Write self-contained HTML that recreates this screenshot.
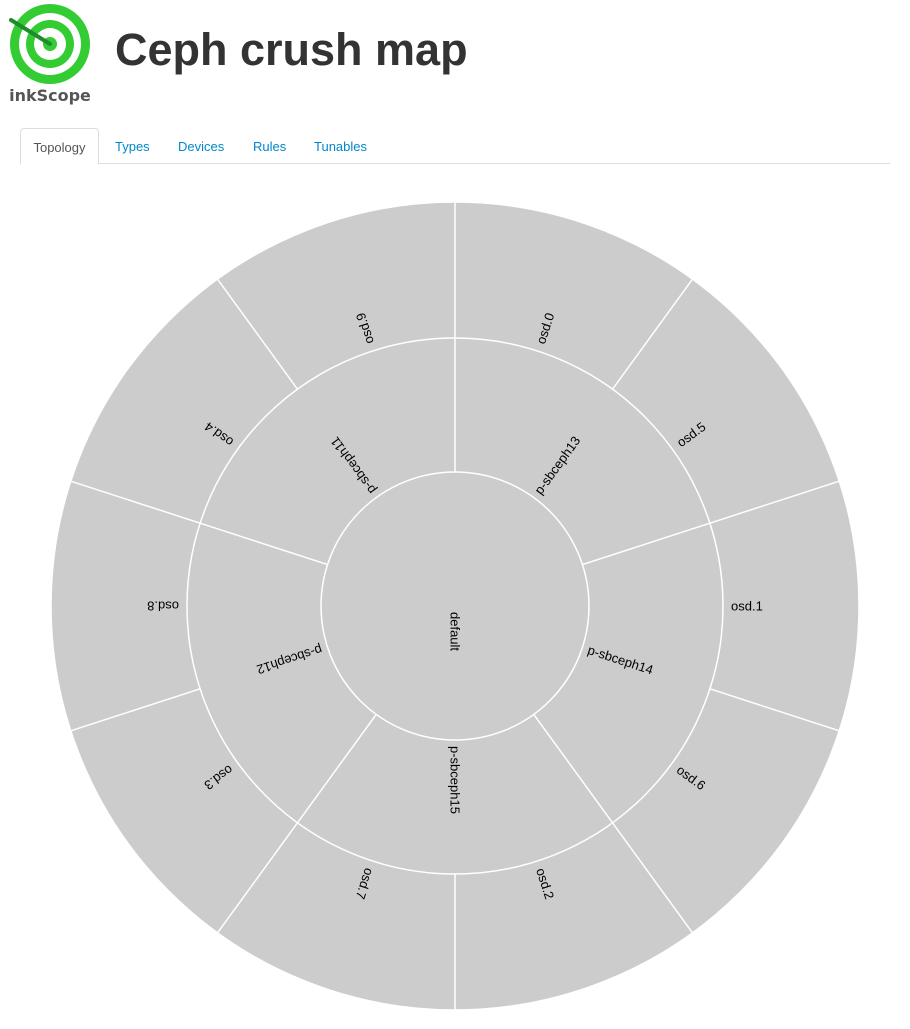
<!DOCTYPE html>
<html><head><meta charset="utf-8"><style>
body{margin:0;background:#fff;width:910px;height:1029px;overflow:hidden;font-family:"Liberation Sans",Arial,sans-serif;}
h1{position:absolute;left:115px;top:22px;margin:0;font-size:45px;font-weight:bold;color:#333;line-height:56px;}
.logo{position:absolute;left:0;top:0;}
.tabs{position:absolute;left:20px;top:128px;width:870px;height:35px;border-bottom:1px solid #ddd;}
.tab{position:absolute;top:0;height:35px;line-height:37px;font-size:13px;color:#0088cc;}
.tab.active{left:0;width:77px;border:1px solid #ddd;border-bottom:1px solid #fff;border-radius:4px 4px 0 0;color:#555;text-align:center;background:#fff;height:35px;}
svg.sb text{font-family:"Liberation Sans",Arial,sans-serif;font-size:13px;fill:#000;}
</style></head><body>
<svg class="logo" width="100" height="110" viewBox="0 0 100 110">
<circle cx="50" cy="44" r="40" fill="#33cc33"/>
<circle cx="50" cy="44" r="31" fill="#fff"/>
<circle cx="50" cy="44" r="24" fill="#33cc33"/>
<circle cx="50" cy="44" r="16" fill="#fff"/>
<circle cx="50" cy="44" r="7" fill="#33cc33"/>
<line x1="11" y1="20" x2="50" y2="44" stroke="#1e8c2a" stroke-width="4" stroke-linecap="round"/>
<text x="50" y="101" text-anchor="middle" font-family="DejaVu Sans, sans-serif" font-weight="bold" font-size="16" fill="#555">inkScope</text>
</svg>
<h1>Ceph crush map</h1>
<div class="tabs">
<div class="tab active">Topology</div>
<div class="tab" style="left:95px">Types</div>
<div class="tab" style="left:158px">Devices</div>
<div class="tab" style="left:233px">Rules</div>
<div class="tab" style="left:294px">Tunables</div>
</div>
<svg class="sb" width="910" height="1029" style="position:absolute;left:0;top:0">
<g transform="translate(455,606)" stroke="#fff" stroke-width="1.5">
<circle r="404" fill="#ccc" stroke="#fff"/>
<circle r="268" fill="none"/>
<circle r="134" fill="none"/>
<g>
<line y1="-134" y2="-404" transform="rotate(0)"/>
<line y1="-268" y2="-404" transform="rotate(36)"/>
<line y1="-134" y2="-404" transform="rotate(72)"/>
<line y1="-268" y2="-404" transform="rotate(108)"/>
<line y1="-134" y2="-404" transform="rotate(144)"/>
<line y1="-268" y2="-404" transform="rotate(180)"/>
<line y1="-134" y2="-404" transform="rotate(216)"/>
<line y1="-268" y2="-404" transform="rotate(252)"/>
<line y1="-134" y2="-404" transform="rotate(288)"/>
<line y1="-268" y2="-404" transform="rotate(324)"/>
</g>
<g stroke="none">
<text x="6" dy=".35em" transform="rotate(90)">default</text>
<text x="140" dy=".35em" transform="rotate(-54)">p-sbceph13</text>
<text x="140" dy=".35em" transform="rotate(18)">p-sbceph14</text>
<text x="140" dy=".35em" transform="rotate(90)">p-sbceph15</text>
<text x="140" dy=".35em" transform="rotate(162)">p-sbceph12</text>
<text x="140" dy=".35em" transform="rotate(234)">p-sbceph11</text>
<text x="276" dy=".35em" transform="rotate(-72)">osd.0</text>
<text x="276" dy=".35em" transform="rotate(-36)">osd.5</text>
<text x="276" dy=".35em" transform="rotate(0)">osd.1</text>
<text x="276" dy=".35em" transform="rotate(36)">osd.6</text>
<text x="276" dy=".35em" transform="rotate(72)">osd.2</text>
<text x="276" dy=".35em" transform="rotate(108)">osd.7</text>
<text x="276" dy=".35em" transform="rotate(144)">osd.3</text>
<text x="276" dy=".35em" transform="rotate(180)">osd.8</text>
<text x="276" dy=".35em" transform="rotate(216)">osd.4</text>
<text x="276" dy=".35em" transform="rotate(252)">osd.9</text>
</g>
</g>
</svg>
</body></html>
